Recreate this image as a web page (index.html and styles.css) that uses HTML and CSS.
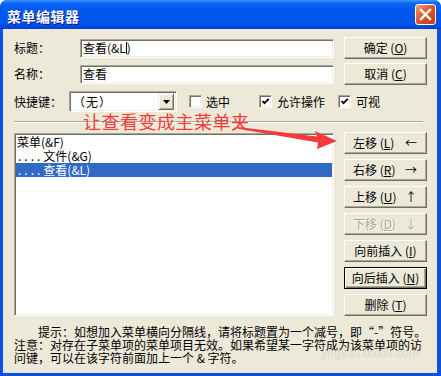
FILE: index.html
```html
<!DOCTYPE html>
<html lang="zh-CN">

<head>
    <meta charset="UTF-8">
    <meta name="viewport" content="width=device-width, initial-scale=1.0">
    <title>菜单编辑器</title>
    <link rel="stylesheet" href="styles.css">
</head>

<body>
    <div class="window">
        <div class="titlebar">
            <span class="title">菜单编辑器</span>
            <div class="close-btn">
                <svg width="13" height="13" viewBox="0 0 13 13">
                    <path d="M2 2 L11 11 M11 2 L2 11" stroke="#fff" stroke-width="2.4" stroke-linecap="square" />
                </svg>
            </div>
        </div>

        <div class="client">
            <div class="top-grid">
                <div class="field">
                    <span class="label">标题：</span>
                    <div class="input">查看(&amp;L<span class="caret"></span>)</div>
                </div>
                <div class="btn">确定 (<u>O</u>)</div>
                <div class="field">
                    <span class="label">名称：</span>
                    <div class="input">查看</div>
                </div>
                <div class="btn">取消 (<u>C</u>)</div>
            </div>

            <div class="options">
                <span class="label short">快捷键：</span>
                <div class="combo">
                    <span class="combo-text">（无）</span>
                    <div class="combo-btn">
                        <svg width="7" height="4" viewBox="0 0 7 4"><path d="M0 0 H7 L3.5 4 Z" fill="#000" /></svg>
                    </div>
                </div>
                <div class="check check-sel"><span class="box"></span>选中</div>
                <div class="check check-allow"><span class="box"><svg width="9" height="9" viewBox="0 0 9 9"><path d="M1.5 4 L3.5 6.2 L7.8 1.8" stroke="#000" stroke-width="1.8" fill="none" /></svg></span>允许操作</div>
                <div class="check check-vis"><span class="box"><svg width="9" height="9" viewBox="0 0 9 9"><path d="M1.5 4 L3.5 6.2 L7.8 1.8" stroke="#000" stroke-width="1.8" fill="none" /></svg></span>可视</div>
            </div>

            <div class="separator"></div>

            <div class="mid-grid">
                <div class="listbox">
                    <div class="item">菜单(&amp;F)</div>
                    <div class="item"><span class="dots">....</span>文件(&amp;G)</div>
                    <div class="item selected"><span class="dots">....</span>查看(&amp;L)</div>
                </div>
                <div class="btn-col">
                    <div class="btn move"><span>左移 (<u>L</u>)</span><span>←</span></div>
                    <div class="btn move"><span>右移 (<u>R</u>)</span><span>→</span></div>
                    <div class="btn move"><span>上移 (<u>U</u>)</span><span>↑</span></div>
                    <div class="btn move disabled"><span>下移 (<u>D</u>)</span><span>↓</span></div>
                    <div class="btn">向前插入 (<u>I</u>)</div>
                    <div class="btn default">向后插入 (<u>N</u>)</div>
                    <div class="btn">删除 (<u>T</u>)</div>
                </div>
            </div>

            <div class="hint">
                <div class="hint-line indent">提示：如想加入菜单横向分隔线，请将标题置为一个减号，即“-”符号。</div>
                <div class="hint-line">注意：对存在子菜单项的菜单项目无效。如果希望某一字符成为该菜单项的访</div>
                <div class="hint-line">问键，可以在该字符前面加上一个 &amp; 字符。</div>
            </div>
        </div>

        <!-- 截图上的红色批注 -->
        <div class="note">让查看变成主菜单夹</div>
        <svg class="arrow" width="441" height="376" viewBox="0 0 441 376">
            <polygon points="238,127 317,136.5 315,131 337,141 317,149 318,142.5 238,128.8" fill="#F43A3A" />
        </svg>
        <div class="watermark">jingyan.baidu.com</div>
    </div>
</body>

</html>
```

FILE: styles.css
```css
* {
    margin: 0;
    padding: 0;
    box-sizing: border-box;
}

body {
    background: #fff;
    font-family: "Noto Sans CJK SC", sans-serif;
    font-size: 12px;
    color: #000;
}

.window {
    position: relative;
    width: 441px;
    height: 376px;
    display: flex;
    flex-direction: column;
    background: #0a52e6;
    border-radius: 7px 7px 0 0;
    overflow: hidden;
}

.titlebar {
    height: 29px;
    flex: none;
    display: flex;
    align-items: center;
    justify-content: space-between;
    padding: 0 5px 0 7px;
    background: linear-gradient(to bottom, #3d95ff 0%, #0a66f6 12%, #0058ee 35%, #0056ea 80%, #0049dc 93%, #003dd0 100%);
}

.title {
    color: #fff;
    font-size: 14px;
    font-weight: bold;
    padding-top: 2px;
    text-shadow: 1px 1px 0 #0c1a8a;
    letter-spacing: 0.5px;
}

.close-btn {
    width: 21px;
    height: 21px;
    border: 1px solid #fff;
    border-radius: 3px;
    background: linear-gradient(135deg, #f0a080 0%, #e0582e 45%, #c83a12 100%);
    display: flex;
    align-items: center;
    justify-content: center;
}

.client {
    flex: 1;
    margin: 0 4px 3px 3px;
    background: #ece9d8;
    padding: 8px 10px 0 11px;
}

/* 上方两行 */
.top-grid {
    display: grid;
    grid-template-columns: 1fr 83px;
    column-gap: 10px;
    row-gap: 4px;
}

.field {
    display: flex;
    align-items: center;
}

.label {
    width: 66px;
    flex: none;
    line-height: 14px;
}

.label.short {
    width: 55px;
}

.input {
    flex: 1;
    height: 19px;
    background: #fff;
    border: 1px solid;
    border-color: #aca899 #fff #fff #aca899;
    box-shadow: inset 1px 1px #716f64, inset -1px -1px #f1efe2;
    padding-left: 2px;
    line-height: 16px;
    white-space: nowrap;
}

.caret {
    display: inline-block;
    width: 1px;
    height: 12px;
    background: #000;
    vertical-align: -1px;
}

.btn {
    height: 22px;
    background: #ece9d8;
    border: 1px solid;
    border-color: #fff #716f64 #716f64 #fff;
    box-shadow: inset -1px -1px #aca899;
    display: flex;
    align-items: center;
    justify-content: center;
    line-height: 14px;
    white-space: nowrap;
}

.btn u {
    text-decoration: underline;
}

.btn.move {
    justify-content: space-between;
    padding: 0 9px 0 8px;
}

.btn.disabled {
    color: #aca899;
    text-shadow: 1px 1px 0 #fff;
}

.btn.default {
    border: 1px solid #000;
    box-shadow: inset 1px 1px #fff, inset -1px -1px #716f64, inset -2px -2px #aca899;
}

/* 快捷键行 */
.options {
    display: flex;
    align-items: center;
    margin-top: 6px;
    height: 21px;
}

.combo {
    width: 108px;
    height: 21px;
    background: #fff;
    border: 1px solid;
    border-color: #aca899 #fff #fff #aca899;
    box-shadow: inset 1px 1px #716f64, inset -1px -1px #f1efe2;
    display: flex;
    align-items: center;
    padding: 2px;
}

.combo-text {
    flex: 1;
    padding-left: 1px;
    line-height: 14px;
    letter-spacing: 1px;
}

.combo-btn {
    width: 16px;
    height: 17px;
    background: #ece9d8;
    border: 1px solid;
    border-color: #f1efe2 #716f64 #716f64 #f1efe2;
    box-shadow: inset 1px 1px #fff, inset -1px -1px #aca899;
    display: flex;
    align-items: center;
    justify-content: center;
}

.check {
    display: flex;
    align-items: center;
    gap: 4px;
    line-height: 14px;
}

.check-sel {
    margin-left: 12px;
}

.check-allow {
    margin-left: 29px;
    gap: 5px;
}

.check-vis {
    margin-left: 13px;
    gap: 5px;
}

.box {
    width: 13px;
    height: 13px;
    background: #fff;
    border: 1px solid;
    border-color: #aca899 #fff #fff #aca899;
    box-shadow: inset 1px 1px #716f64, inset -1px -1px #f1efe2;
    display: flex;
    align-items: center;
    justify-content: center;
}

.separator {
    margin: 9px 4px 0 0;
    height: 2px;
    border-top: 1px solid #aca899;
    border-bottom: 1px solid #fff;
}

/* 列表与按钮 */
.mid-grid {
    display: grid;
    grid-template-columns: 1fr 83px;
    column-gap: 10px;
    margin-top: 9px;
}

.listbox {
    margin-top: 1px;
    height: 183px;
    background: #fff;
    border: 1px solid;
    border-color: #aca899 #fff #fff #aca899;
    box-shadow: inset 1px 1px #716f64, inset -1px -1px #f1efe2;
    padding: 1px 1px;
}

.item {
    height: 14px;
    line-height: 14px;
    padding-left: 1px;
    white-space: nowrap;
}

.dots {
    letter-spacing: 3px;
    padding-left: 1px;
}

.item.selected {
    background: #316ac5;
    color: #fff;
}

.btn-col {
    display: flex;
    flex-direction: column;
    gap: 5px;
}

.hint {
    margin-top: 9px;
}

.hint-line {
    height: 13px;
    line-height: 13px;
    white-space: nowrap;
}

.indent {
    padding-left: 24px;
}

/* 批注和水印 */
.note {
    position: absolute;
    left: 83px;
    top: 110px;
    font-size: 18px;
    line-height: 22px;
    color: #f43a3a;
    letter-spacing: 0.5px;
    white-space: nowrap;
}

.arrow {
    position: absolute;
    left: 0;
    top: 0;
    pointer-events: none;
}

.watermark {
    position: absolute;
    left: 322px;
    top: 346px;
    font-family: "Liberation Sans", sans-serif;
    font-size: 12px;
    color: #dcd9cb;
}
```
